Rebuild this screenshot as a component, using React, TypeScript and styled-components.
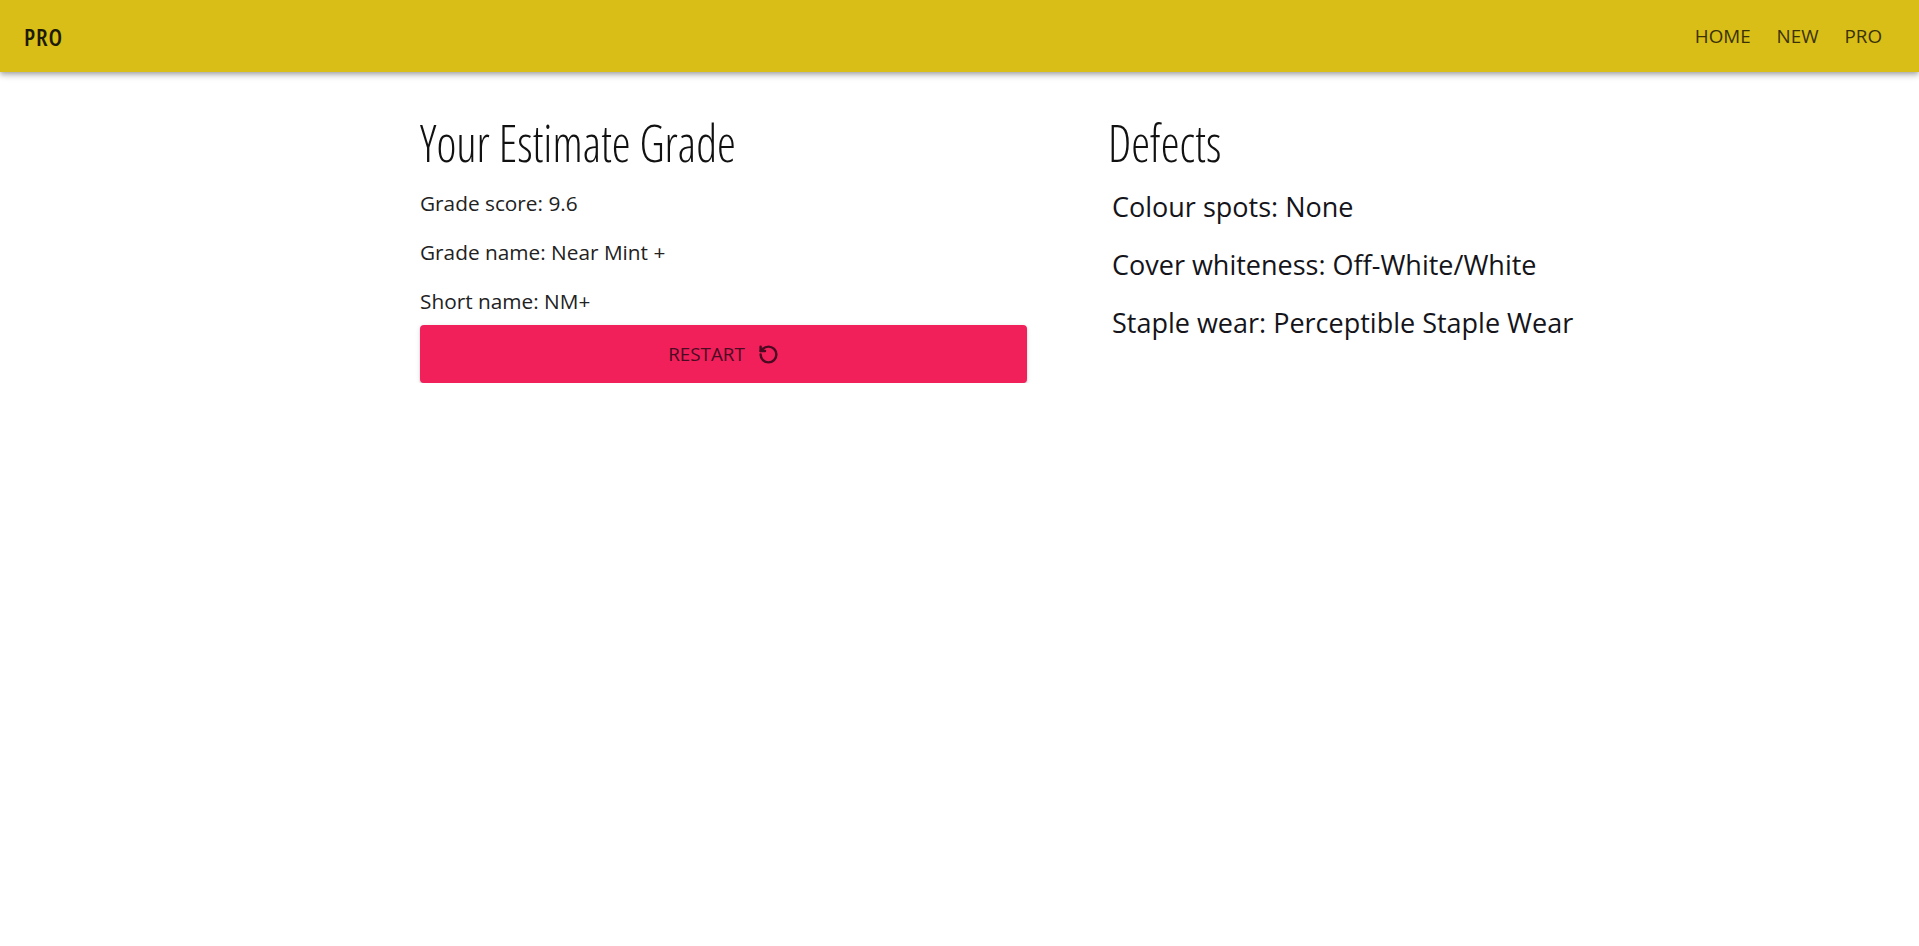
import styled, { createGlobalStyle } from "styled-components";
import { RotateCcw } from "lucide-react";

const GlobalStyle = createGlobalStyle`
  html, body {
    margin: 0;
    padding: 0;
    background: #fff;
  }
  body {
    font-family: "Open Sans", "Liberation Sans", sans-serif;
    color: #14141a;
  }
`;

const AppBar = styled.header`
  height: 72px;
  padding: 0 24px;
  display: flex;
  align-items: center;
  justify-content: space-between;
  background-color: #d8be17;
  box-shadow: 0 2px 4px -1px rgba(0, 0, 0, 0.2), 0 4px 5px 0 rgba(0, 0, 0, 0.14), 0 1px 10px 0 rgba(0, 0, 0, 0.12);
`;

const Brand = styled.div`
  font-size: 24px;
  font-weight: 600;
  font-stretch: 85%;
  letter-spacing: 0.9px;
  color: #1d1a05;
`;

const Nav = styled.nav`
  display: flex;
  gap: 26px;
  margin-right: 13px;
`;

const NavLink = styled.a`
  font-size: 18.8px;
  color: #3a3206;
`;

const Columns = styled.main`
  display: grid;
  grid-template-columns: 607px 1fr;
  column-gap: 81px;
  padding: 38px 0 0 420px;
`;

const Title = styled.h3`
  margin: 0;
  font-size: 52px;
  line-height: 64px;
  font-weight: 300;
  font-stretch: 75%;
  color: #111;
  transform: scaleX(0.915);
  transform-origin: left center;
`;

const Facts = styled.div`
  margin-top: 17px;
  margin-bottom: -13px;
`;

const Fact = styled.p`
  margin: 0 0 24px;
  font-size: 20.8px;
  line-height: 25px;
  color: #222;
`;

const RestartButton = styled.button`
  width: 100%;
  height: 58px;
  border: 0;
  border-radius: 4px;
  display: flex;
  align-items: center;
  justify-content: center;
  gap: 13px;
  background-color: #f2205a;
  color: #4a0a22;
  font-family: inherit;
  font-size: 18.8px;
  box-shadow: 0 3px 1px -2px rgba(0, 0, 0, 0.2), 0 2px 2px 0 rgba(0, 0, 0, 0.14), 0 1px 5px 0 rgba(0, 0, 0, 0.12);
`;

const DefectList = styled.ul`
  list-style: none;
  margin: 14px 0 0;
  padding: 0 0 0 4px;
`;

const Defect = styled.li`
  font-size: 27px;
  line-height: 38px;
  margin-bottom: 20px;
  color: #14141a;
`;

export default function App() {
  return (
    <>
      <GlobalStyle />
      <AppBar>
        <Brand>PRO</Brand>
        <Nav>
          <NavLink>HOME</NavLink>
          <NavLink>NEW</NavLink>
          <NavLink>PRO</NavLink>
        </Nav>
      </AppBar>
      <Columns>
        <section>
          <Title>Your Estimate Grade</Title>
          <Facts>
            <Fact>Grade score: 9.6</Fact>
            <Fact>Grade name: Near Mint +</Fact>
            <Fact>Short name: NM+</Fact>
          </Facts>
          <RestartButton>
            RESTART
            <RotateCcw size={21} strokeWidth={2.8} />
          </RestartButton>
        </section>
        <section>
          <Title>Defects</Title>
          <DefectList>
            <Defect>Colour spots: None</Defect>
            <Defect>Cover whiteness: Off-White/White</Defect>
            <Defect>Staple wear: Perceptible Staple Wear</Defect>
          </DefectList>
        </section>
      </Columns>
    </>
  );
}
